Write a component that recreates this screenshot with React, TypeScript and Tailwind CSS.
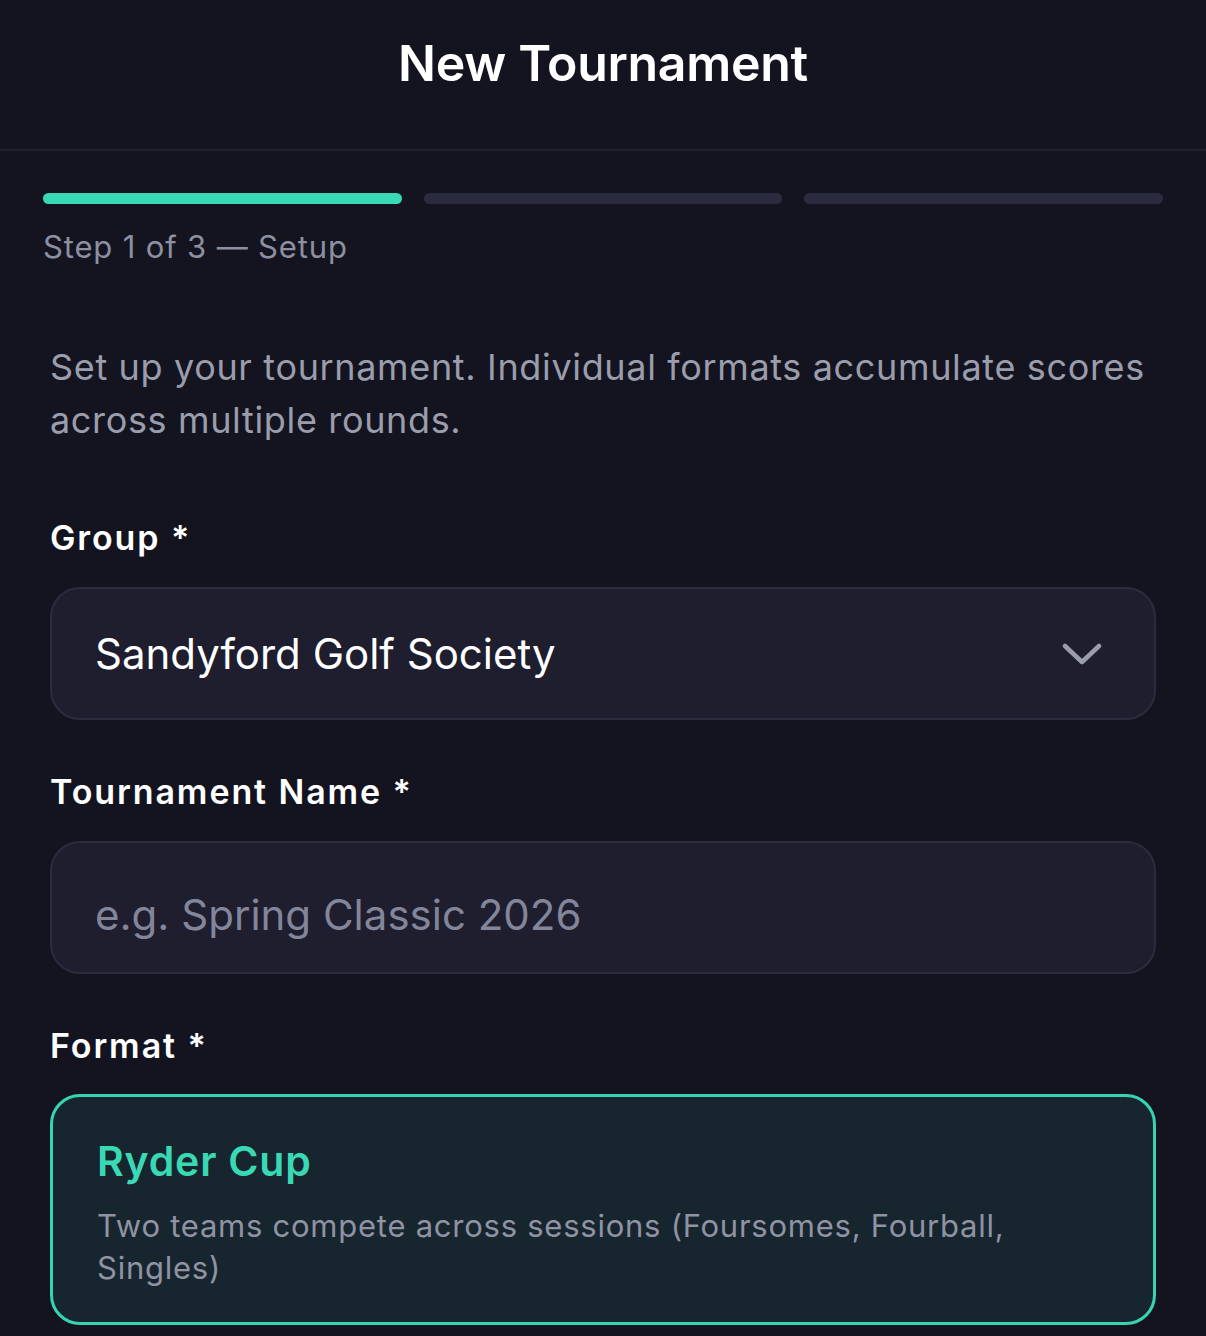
import React from 'react';

const font = { fontFamily: 'Inter, "Noto Sans", sans-serif' };

const FieldLabel: React.FC<{ text: string }> = ({ text }) => (
  <p className="text-[34px] leading-[40px] font-semibold text-white tracking-[1.9px]">{text} *</p>
);

export default function App() {
  return (
    <div style={font} className="min-h-[1336px] w-full bg-[#141421] overflow-hidden">
      {/* Header */}
      <div className="h-[151px] flex items-center justify-center border-b-2 border-[#21212e] pb-[24px]">
        <h1 className="text-[50px] leading-[60px] font-semibold text-white tracking-[-0.3px]">New Tournament</h1>
      </div>

      {/* Progress */}
      <div className="px-[43px] pt-[42px]">
        <div className="flex gap-[22px]">
          <div className="h-[11px] flex-1 rounded-full bg-[#39d9b6]"></div>
          <div className="h-[11px] flex-1 rounded-full bg-[#2a2b3f]"></div>
          <div className="h-[11px] flex-1 rounded-full bg-[#2a2b3f]"></div>
        </div>
        <p className="mt-[25px] text-[31px] leading-[36px] text-[#8c90a0] tracking-[0.85px]">Step 1 of 3 — Setup</p>
      </div>

      <div className="px-[50px]">
        <p className="mt-[76px] text-[36px] leading-[53px] text-[#9a9dab] tracking-[0.65px]">
          Set up your tournament. Individual formats accumulate scores across multiple rounds.
        </p>

        {/* Group */}
        <div className="mt-[71px]">
          <FieldLabel text="Group" />
          <div className="mt-[29px] h-[133px] rounded-[30px] border-2 border-[#2c2c3e] bg-[#1e1e2f] flex items-center justify-between pl-[43px] pr-[52px]">
            <span className="text-[42px] text-white">Sandyford Golf Society</span>
            <svg width="40" height="24" viewBox="0 0 40 24" fill="none">
              <path d="M3 4 L20 20 L37 4" stroke="#9a9dab" strokeWidth="4.5" strokeLinecap="round" strokeLinejoin="round" />
            </svg>
          </div>
        </div>

        {/* Tournament Name */}
        <div className="mt-[52px]">
          <FieldLabel text="Tournament Name" />
          <div className="mt-[29px] h-[133px] rounded-[30px] border-2 border-[#2c2c3e] bg-[#1e1e2f] flex items-center pl-[43px] pt-[14px]">
            <span className="text-[42px] text-[#83869a]">e.g. Spring Classic 2026</span>
          </div>
        </div>

        {/* Format */}
        <div className="mt-[52px]">
          <FieldLabel text="Format" />
          <div className="mt-[28px] rounded-[30px] border-[3px] border-[#36d4b1] bg-[#17252f] pl-[44px] pr-[40px] pt-[40px] pb-[33px]">
            <p className="text-[41px] leading-[48px] font-semibold text-[#39d9b6] tracking-[0.8px]">Ryder Cup</p>
            <p className="mt-[20px] text-[31px] leading-[42px] text-[#8f93a3] tracking-[0.75px]">
              Two teams compete across sessions (Foursomes, Fourball, Singles)
            </p>
          </div>
        </div>
      </div>
    </div>
  );
}
